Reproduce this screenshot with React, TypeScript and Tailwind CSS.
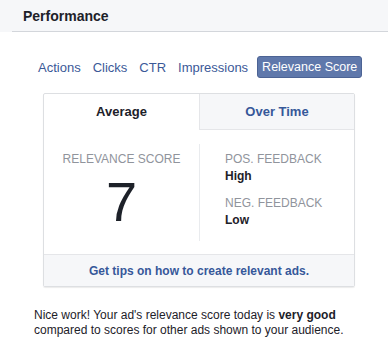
const tabs = ["Actions", "Clicks", "CTR", "Impressions"];

export default function App() {
  return (
    <div className="w-[388px] h-[340px] bg-white text-[#1d2129] font-['Liberation_Sans',Arial,sans-serif] overflow-hidden">
      <div className="h-[32px] bg-[#f6f7f9] pl-[12px]">
        <div className="h-full border-b border-[#d3d6db] pl-[11px] flex items-center">
          <h1 className="text-[14px] font-bold leading-none">Performance</h1>
        </div>
      </div>

      <div className="flex items-center gap-[12px] pl-[38px] mt-[24px] h-[22px]">
        {tabs.map((t) => (
          <a key={t} className="text-[13px] text-[#3b5998] leading-none">
            {t}
          </a>
        ))}
        <span className="ml-[-3px] h-[22px] px-[4px] flex items-center rounded-[3px] bg-[#5f78ab] border border-[#4c6394] text-white text-[12.5px] leading-none">
          Relevance Score
        </span>
      </div>

      <div className="ml-[43px] mt-[15px] w-[312px] border border-[#dddfe2] rounded-[2px] shadow-[0_1px_1px_rgba(0,0,0,0.08)]">
        <div className="grid grid-cols-2 h-[36px]">
          <div className="flex items-center justify-center text-[13px] font-bold">Average</div>
          <div className="flex items-center justify-center text-[13px] font-bold text-[#365899] bg-[#f6f7f9] border-l border-b border-[#e5e6e9]">
            Over Time
          </div>
        </div>

        <div className="grid grid-cols-2 pt-[14px] pb-[13px] h-[124px]">
          <div className="flex flex-col items-center pt-[8px]">
            <div className="text-[12px] leading-[15px] text-[#90949c]">RELEVANCE SCORE</div>
            <div className="text-[56px] leading-none mt-[7px]">7</div>
          </div>
          <div className="border-l border-[#e9ebee] pl-[25px] pt-[8px] text-[12px] leading-[15px]">
            <div className="text-[#90949c]">POS. FEEDBACK</div>
            <div className="font-bold mt-[2px]">High</div>
            <div className="text-[#90949c] mt-[12px]">NEG. FEEDBACK</div>
            <div className="font-bold mt-[2px]">Low</div>
          </div>
        </div>

        <div className="h-[32px] bg-[#f6f7f9] border-t border-[#e5e6e9] flex items-center justify-center">
          <a className="text-[12px] font-bold text-[#365899]">Get tips on how to create relevant ads.</a>
        </div>
      </div>

      <p className="ml-[34px] mt-[21px] text-[12px] leading-[15px] text-[#1d2129]">
        Nice work! Your ad's relevance score today is <b>very good</b>
        <br />
        compared to scores for other ads shown to your audience.
      </p>
    </div>
  );
}
